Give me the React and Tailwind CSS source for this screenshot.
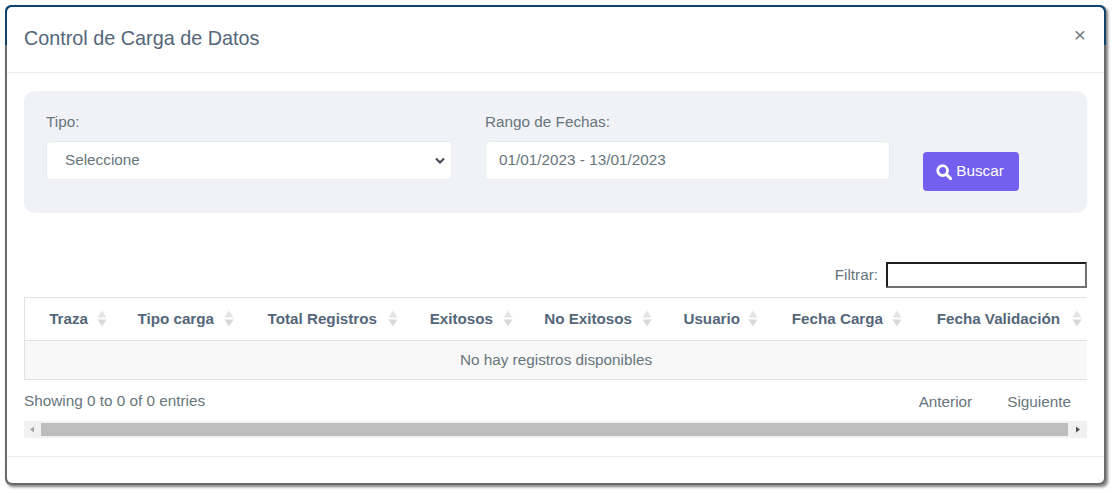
const headers = [
  ["Traza", "w-[91px]", "gap-[9px]"],
  ["Tipo carga", "w-[127px]", "gap-[10px]"],
  ["Total Registros", "w-[164px]", "gap-[11px]"],
  ["Exitosos", "w-[115px]", "gap-[10px]"],
  ["No Exitosos", "w-[139px]", "gap-[10px]"],
  ["Usuario", "w-[106px]", "gap-[8px]"],
  ["Fecha Carga", "w-[144px]", "gap-[9px]"],
  ["Fecha Validación", "w-[180px]", "gap-[12px]"],
];

function SortIcon() {
  return (
    <svg width="10" height="17" viewBox="0 0 10 17" className="shrink-0">
      <path d="M5 0.5 L9.5 7.5 H0.5 Z" fill="#e4e4e4" />
      <path d="M5 16.5 L9.5 9.5 H0.5 Z" fill="#d8d8d8" />
    </svg>
  );
}

export default function App() {
  return (
    <div className="w-[1115px] h-[493px] bg-white pt-[5px] pr-[9px] pb-[8px] pl-[5px] font-['Liberation_Sans',Arial,sans-serif] text-[#54667a] overflow-hidden">
      <div className="h-[480px] p-[2px] rounded-[6px] bg-[linear-gradient(to_bottom,#10436b_0,#10436b_40px,#6a6a6a_40px,#6a6a6a_100%)] shadow-[2px_2px_3px_rgba(0,0,0,0.5)]">
        <div className="flex flex-col h-full bg-white rounded-[5px] overflow-hidden">
          <header className="flex h-[66px] shrink-0 items-start justify-between border-b border-[#e9ecef] pl-[17px] pr-[18px]">
            <h1 className="mt-[16px] text-[19.8px] leading-[30px] font-normal text-[#54667a]">Control de Carga de Datos</h1>
            <span className="mt-[17px] text-[21px] leading-[21px] font-normal text-[#727a81]">×</span>
          </header>

          <main className="flex flex-col flex-1 px-[17px] pt-[18px]">
            <section className="flex h-[122px] shrink-0 rounded-[10px] bg-[#f1f2f7] pl-[22px] pt-[21px]">
              <div className="flex flex-col w-[406px]">
                <label className="text-[15.3px] leading-[20px] mb-[9px] text-[#67757c]">Tipo:</label>
                <div className="flex items-center justify-between h-[39px] rounded-[4px] border border-[#e9ecef] bg-white pl-[18px] pr-[6px] text-[15.3px] text-[#67757c]">
                  <span>Seleccione</span>
                  <svg width="10" height="7" viewBox="0 0 10 7"><path d="M1 1.5 L5 5.5 L9 1.5" fill="none" stroke="#3c4650" strokeWidth="2" /></svg>
                </div>
              </div>
              <div className="flex flex-col w-[405px] ml-[33px]">
                <label className="text-[15.3px] leading-[20px] mb-[9px] text-[#67757c]">Rango de Fechas:</label>
                <div className="flex items-center h-[39px] rounded-[4px] border border-[#e9ecef] bg-white pl-[13px] text-[15.3px] text-[#67757c]">01/01/2023 - 13/01/2023</div>
              </div>
              <button className="flex items-center justify-center w-[96px] h-[39px] ml-[33px] mt-[40px] pr-[2px] gap-[4px] rounded-[4px] bg-[#7460ee] text-[15.3px] text-white">
                <svg width="16" height="16" viewBox="0 0 16 16"><circle cx="6.6" cy="6.6" r="4.9" fill="none" stroke="white" strokeWidth="2.8" /><path d="M10.4 10.4 L14.6 14.6" stroke="white" strokeWidth="3" strokeLinecap="round" /></svg>
                Buscar
              </button>
            </section>

            <div className="flex justify-end items-center h-[26px] mt-[49px] text-[15.3px] text-[#67757c]">
              <label className="mr-[8px]">Filtrar:</label>
              <div className="w-[201px] h-[26px] border-2 rounded-[1px] border-t-[#1f1f1f] border-l-[#1f1f1f] border-r-[#6f6f6f] border-b-[#6f6f6f] bg-white" />
            </div>

            <div className="mt-[9px] border-t border-b border-l border-[#dee2e6]">
              <div className="flex h-[43px] items-center border-b border-[#dee2e6] text-[15.2px] font-bold">
                {headers.map(([name, w, gap]) => (
                  <div key={name} className={`flex items-center justify-end pr-[9px] shrink-0 ${w} ${gap}`}>
                    <span>{name}</span>
                    <SortIcon />
                  </div>
                ))}
              </div>
              <div className="flex h-[38px] items-center justify-center bg-[#f8f8f8] text-[15.3px] text-[#67757c]">No hay registros disponibles</div>
            </div>

            <div className="flex justify-between h-[41px] pt-[12px] text-[15.3px] leading-[18px] text-[#67757c]">
              <span>Showing 0 to 0 of 0 entries</span>
              <div className="flex gap-[35px] pr-[16px] pt-[1px]">
                <span>Anterior</span>
                <span>Siguiente</span>
              </div>
            </div>

            <div className="flex items-center h-[17px] bg-[#f1f1f1]">
              <svg width="17" height="17" viewBox="0 0 17 17" className="shrink-0"><path d="M10 5.5 V11.5 L6 8.5 Z" fill="#a3a3a3" /></svg>
              <div className="flex-1 h-[13px] bg-[#bdbdbd]" />
              <svg width="19" height="17" viewBox="0 0 19 17" className="shrink-0"><path d="M8 5.5 V11.5 L12 8.5 Z" fill="#505050" /></svg>
            </div>
          </main>

          <footer className="h-[27px] shrink-0 border-t border-[#e9ecef]" />
        </div>
      </div>
    </div>
  );
}
